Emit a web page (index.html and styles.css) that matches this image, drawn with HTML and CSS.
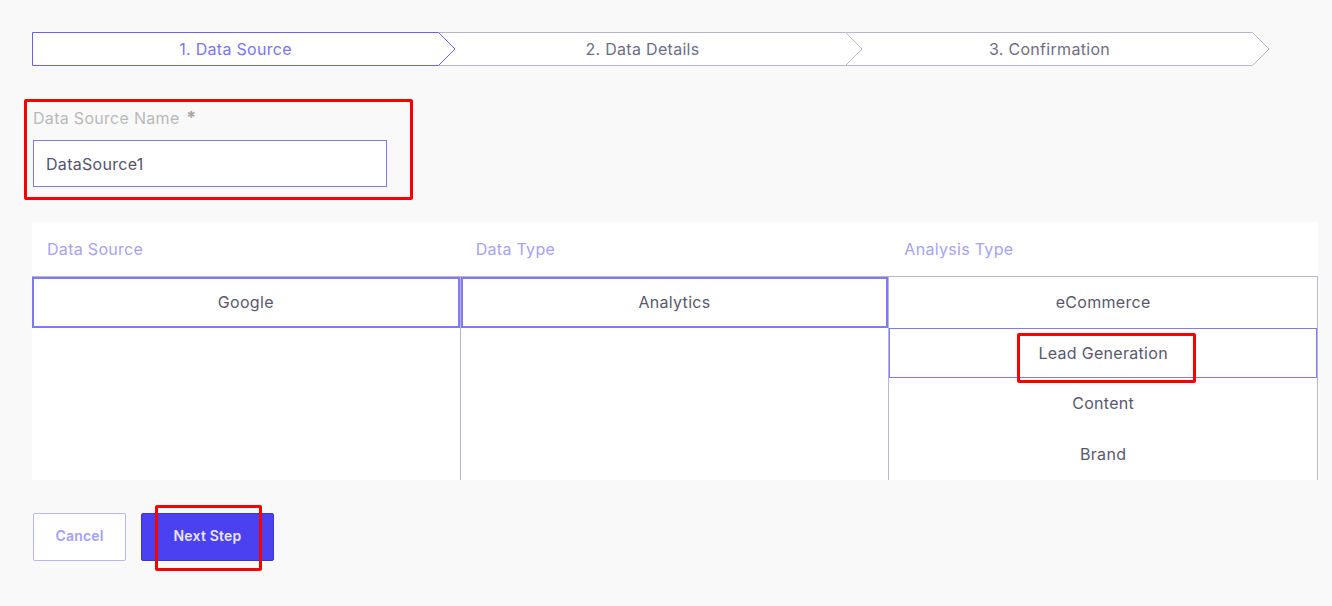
FILE: index.html
```html
<!DOCTYPE html>
<html lang="en">
<head>
    <meta charset="UTF-8">
    <meta name="viewport" content="width=device-width, initial-scale=1.0">
    <title>New Data Source</title>
    <link rel="stylesheet" href="styles.css">
</head>
<body>
    <ol class="steps">
        <li class="step active">
            <svg class="step-shape" viewBox="0 0 424 34" preserveAspectRatio="none"><polygon points="0.5,0.5 406.5,0.5 423,17 406.5,33.5 0.5,33.5"/></svg>
            <span>1. Data Source</span>
        </li>
        <li class="step">
            <svg class="step-shape" viewBox="0 0 424 34" preserveAspectRatio="none"><polyline points="0,0.5 406.5,0.5 423,17 406.5,33.5 0,33.5"/></svg>
            <span>2. Data Details</span>
        </li>
        <li class="step">
            <svg class="step-shape" viewBox="0 0 424 34" preserveAspectRatio="none"><polyline points="0,0.5 406.5,0.5 423,17 406.5,33.5 0,33.5"/></svg>
            <span>3. Confirmation</span>
        </li>
    </ol>

    <div class="name-field">
        <label class="field-label" for="ds-name">Data Source Name<span class="req">✱</span></label>
        <input class="field-input" id="ds-name" type="text" value="DataSource1">
    </div>

    <div class="picker">
        <div class="picker-col">
            <div class="picker-head">Data Source</div>
            <ul class="picker-list">
                <li class="picker-item selected">Google</li>
            </ul>
        </div>
        <div class="picker-col">
            <div class="picker-head">Data Type</div>
            <ul class="picker-list">
                <li class="picker-item selected">Analytics</li>
            </ul>
        </div>
        <div class="picker-col">
            <div class="picker-head">Analysis Type</div>
            <ul class="picker-list">
                <li class="picker-item">eCommerce</li>
                <li class="picker-item selected thin">Lead Generation<span class="mark mark-lead"></span></li>
                <li class="picker-item">Content</li>
                <li class="picker-item">Brand</li>
            </ul>
        </div>
    </div>

    <div class="actions">
        <button class="btn btn-cancel">Cancel</button>
        <button class="btn btn-next">Next Step</button>
        <span class="mark mark-next"></span>
    </div>
</body>
</html>
```

FILE: styles.css
```css
body {
    margin: 0;
    padding: 32px 14px 40px 32px;
    background: #f9f9f9;
    font-family: Inter, "Open Sans", sans-serif;
    font-size: 16px;
    letter-spacing: 0.3px;
    color: #5a586e;
}

/* stepper */
.steps {
    list-style: none;
    margin: 0;
    padding: 0;
    display: flex;
}
.step {
    position: relative;
    width: 424px;
    height: 34px;
    margin-right: -17px;
    display: flex;
    align-items: center;
    justify-content: center;
    padding-right: 17px;
    box-sizing: border-box;
    color: #6f6d85;
}
.step:nth-child(1) { z-index: 3; }
.step:nth-child(2) { z-index: 2; }
.step:nth-child(3) { z-index: 1; }
.step-shape {
    position: absolute;
    left: 0;
    top: 0;
    width: 100%;
    height: 100%;
}
.step-shape polygon,
.step-shape polyline {
    fill: #fff;
    stroke: #b9b7cf;
    stroke-width: 1;
}
.step.active { color: #7a74f2; }
.step.active .step-shape polygon { stroke: #6a62f5; }
.step span {
    position: relative;
}

/* name field */
.name-field {
    width: 389px;
    box-sizing: border-box;
    margin: 33px 0 22px -8px;
    padding: 6px 23px 10px 6px;
    border: 3px solid #f60000;
    border-radius: 2px;
}
.field-label {
    display: block;
    height: 20px;
    line-height: 20px;
    margin-bottom: 12px;
    color: #b9b9b9;
}
.req {
    position: relative;
    top: -6px;
    margin-left: 7px;
    font-size: 10px;
    line-height: 0;
    color: #a9a9a9;
}
.field-input {
    display: block;
    width: 354px;
    height: 47px;
    box-sizing: border-box;
    padding: 0 12px;
    border: 1px solid #7f78f5;
    background: #fff;
    font: inherit;
    letter-spacing: 0.3px;
    color: #55536e;
    outline: none;
}

/* picker table */
.picker {
    display: grid;
    grid-template-columns: repeat(3, 1fr);
    width: 1286px;
    height: 258px;
    overflow: hidden;
    background: #fff;
}
.picker-head {
    height: 54px;
    line-height: 54px;
    padding-left: 15px;
    color: #a6a2f8;
}
.picker-list {
    list-style: none;
    margin: 0;
    padding: 0;
    height: 100%;
    border-top: 1px solid #b9b7cf;
    border-right: 1px solid #b9b7cf;
}
.picker-item {
    position: relative;
    height: 50.5px;
    display: flex;
    align-items: center;
    justify-content: center;
}
.picker-item.selected {
    box-shadow: inset 0 0 0 2px #7f78f7;
}
.picker-item.selected.thin {
    box-shadow: inset 0 0 0 1px #7f78f7;
}

/* buttons */
.actions {
    position: relative;
    display: flex;
    gap: 15px;
    margin-top: 33px;
    padding-left: 1px;
}
.btn {
    height: 48px;
    padding: 0 0 3px;
    font-family: inherit;
    font-size: 14px;
    font-weight: 600;
    letter-spacing: 0.2px;
    border-radius: 2px;
    cursor: pointer;
}
.btn-cancel {
    width: 93px;
    background: #fff;
    border: 1px solid #b8b4f8;
    color: #a39ff6;
}
.btn-next {
    width: 133px;
    background: #4b41f1;
    border: 1px solid #3d34d6;
    color: #e8e6ff;
}

/* red review marks */
.mark {
    position: absolute;
    border: 3px solid #f60000;
    border-radius: 2px;
    pointer-events: none;
}
.mark-lead {
    left: 128px;
    top: 5px;
    width: 173px;
    height: 44px;
}
.mark-next {
    left: 123px;
    top: -8px;
    width: 101px;
    height: 60px;
}
```
